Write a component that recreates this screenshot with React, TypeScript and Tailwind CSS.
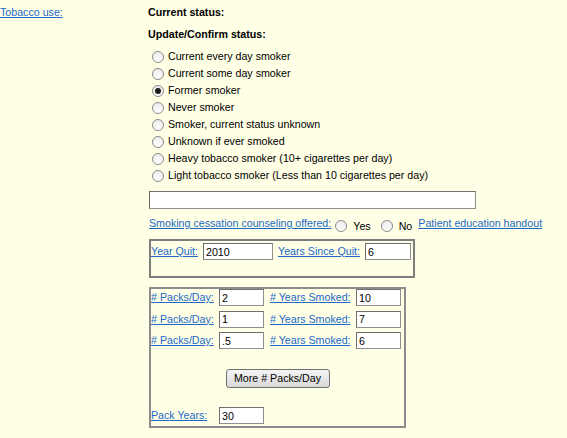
import React from "react";

const linkCls = "text-[#2268c8] underline decoration-[#2268c8] whitespace-nowrap cursor-pointer";
const inputCls =
  "h-[17px] bg-white border border-[#8f8f8f] border-t-[#6f6f6f] border-l-[#6f6f6f] px-[2px] text-[10.67px] leading-[15px] text-black outline-none";

const statuses = [
  "Current every day smoker",
  "Current some day smoker",
  "Former smoker",
  "Never smoker",
  "Smoker, current status unknown",
  "Unknown if ever smoked",
  "Heavy tobacco smoker (10+ cigarettes per day)",
  "Light tobacco smoker (Less than 10 cigarettes per day)",
];

const Radio = ({ checked = false }: { checked?: boolean }) => (
  <span className="w-3 h-3 rounded-full border border-[#8a8a8a] bg-linear-to-b from-[#ececec] to-white flex items-center justify-center shrink-0">
    {checked && <span className="w-[6px] h-[6px] rounded-full bg-[#1a1a1a]" />}
  </span>
);

const packs = [
  { p: "2", y: "10" },
  { p: "1", y: "7" },
  { p: ".5", y: "6" },
];

export default function App() {
  return (
    <div className="min-h-screen w-full bg-[#FFFFE6] font-['Liberation_Sans',Arial,sans-serif] text-[10.67px] leading-[13px] text-black flex">
      {/* label column */}
      <div className="w-[148px] shrink-0 pt-[6px]">
        <a className={linkCls}>Tobacco use:</a>
      </div>

      {/* form column */}
      <div className="flex flex-col pt-[6px]">
        <div className="font-bold">Current status:</div>
        <div className="font-bold mt-[9px]">Update/Confirm status:</div>

        <div className="mt-[7px] flex flex-col">
          {statuses.map((s, i) => (
            <div key={s} className="h-[17px] flex items-center gap-[4px] pl-[4px]">
              <Radio checked={i === 2} />
              <span className="whitespace-nowrap">{s}</span>
            </div>
          ))}
        </div>

        <input readOnly className={`${inputCls} ml-px mt-[7px] w-[327px] h-[18px]`} defaultValue="" />

        <div className="mt-[6px] h-[17px] flex items-center ml-px">
          <a className={linkCls}>Smoking cessation counseling offered:</a>
          <span className="ml-[4px] mt-[4px]"><Radio /></span>
          <span className="ml-[6px] mt-[5px]">Yes</span>
          <span className="ml-[10px] mt-[4px]"><Radio /></span>
          <span className="ml-[6px] mt-[5px]">No</span>
          <a className={`${linkCls} ml-[6px]`}>Patient education handout</a>
        </div>

        {/* quit box */}
        <div className="ml-px mt-[7px] w-[266px] h-[39px] border-2 border-[#7d7d7d] pt-[2px]">
          <div className="flex items-center">
            <a className={linkCls}>Year Quit:</a>
            <input readOnly className={`${inputCls} ml-[5px] w-[70px]`} defaultValue="2010" />
            <a className={`${linkCls} ml-[5px]`}>Years Since Quit:</a>
            <input readOnly className={`${inputCls} ml-[5px] w-[46px]`} defaultValue="6" />
          </div>
        </div>

        {/* packs box */}
        <div className="ml-px mt-[9px] w-[257px] h-[141px] border-2 border-[#8c8c8c] flex flex-col">
          <div className="flex flex-col gap-[4.5px]">
            {packs.map((r, i) => (
              <div key={i} className="flex items-center">
                <div className="w-[68px]">
                  <a className={linkCls}># Packs/Day:</a>
                </div>
                <input readOnly className={`${inputCls} w-[45px]`} defaultValue={r.p} />
                <div className="w-[92px] pl-[6px]">
                  <a className={linkCls}># Years Smoked:</a>
                </div>
                <input readOnly className={`${inputCls} w-[45px]`} defaultValue={r.y} />
              </div>
            ))}
          </div>

          <div className="mt-[20px] flex justify-center">
            <button className="w-[104px] h-[19px] rounded-[3px] border border-[#707070] bg-linear-to-b from-[#f4f4f4] to-[#d9d9d9] text-[10.67px] text-black leading-[17px]">
              More # Packs/Day
            </button>
          </div>

          <div className="mt-[19px] flex items-center">
            <div className="w-[68px]">
              <a className={linkCls}>Pack Years:</a>
            </div>
            <input readOnly className={`${inputCls} w-[45px]`} defaultValue="30" />
          </div>
        </div>
      </div>
    </div>
  );
}
